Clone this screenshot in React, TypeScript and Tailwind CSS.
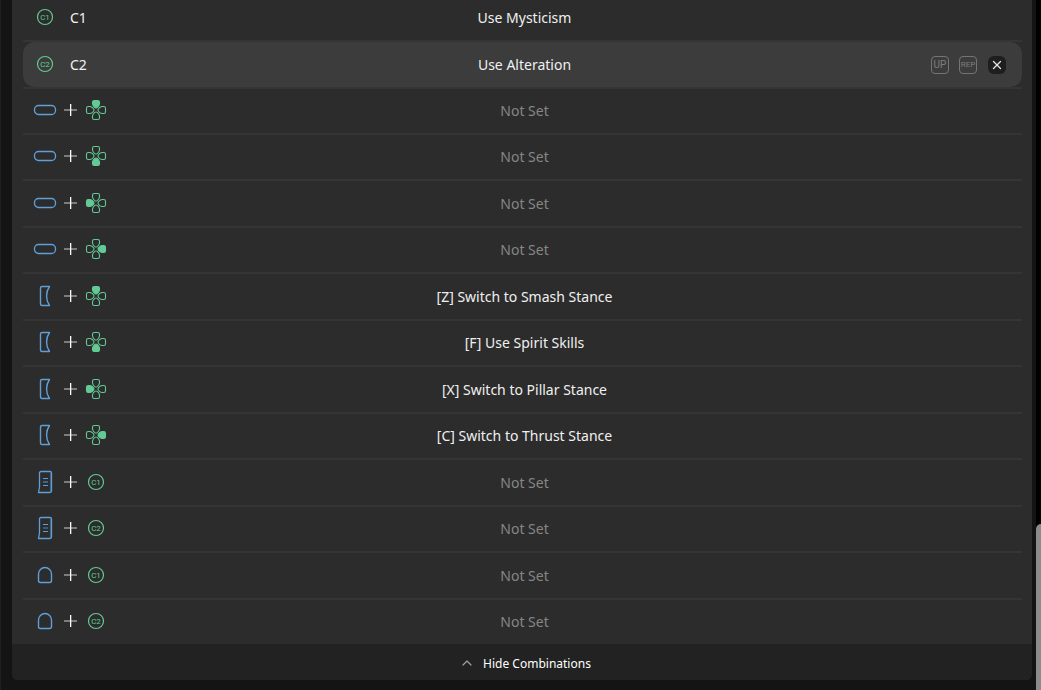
import { ChevronUp, X } from "lucide-react";
import clsx from "clsx";

type IconName = "up" | "down" | "left" | "right" | "c1" | "c2" | "pill" | "bumper" | "trigger" | "paddle";

type Binding = {
  keys: IconName[];
  name?: string;
  action?: string;
  active?: boolean;
  tall?: boolean;
};

const bindings: Binding[] = [
  { keys: ["c1"], name: "C1", action: "Use Mysticism" },
  { keys: ["c2"], name: "C2", action: "Use Alteration", active: true, tall: true },
  { keys: ["pill", "up"] },
  { keys: ["pill", "down"] },
  { keys: ["pill", "left"], tall: true },
  { keys: ["pill", "right"] },
  { keys: ["bumper", "up"], action: "[Z] Switch to Smash Stance", tall: true },
  { keys: ["bumper", "down"], action: "[F] Use Spirit Skills" },
  { keys: ["bumper", "left"], action: "[X] Switch to Pillar Stance", tall: true },
  { keys: ["bumper", "right"], action: "[C] Switch to Thrust Stance" },
  { keys: ["trigger", "c1"], tall: true },
  { keys: ["trigger", "c2"] },
  { keys: ["paddle", "c1"], tall: true },
  { keys: ["paddle", "c2"] },
];

const petals = [
  { dir: "up", angle: 0 },
  { dir: "right", angle: 90 },
  { dir: "down", angle: 180 },
  { dir: "left", angle: 270 },
];

function KeyIcon({ name }: { name: IconName }) {
  const green = "#63ca95";
  const blue = "#5f9fd8";

  if (name === "c1" || name === "c2") {
    return (
      <svg viewBox="0 0 24 24" className="w-6 h-6 shrink-0" fill="none">
        <circle cx="12" cy="12" r="7.5" stroke={green} strokeWidth="1.2" />
        <text
          x="12"
          y="15"
          textAnchor="middle"
          fill={green}
          className="font-['Roboto',sans-serif] text-[8px]"
        >
          {name.toUpperCase()}
        </text>
      </svg>
    );
  }

  if (name === "pill") {
    return (
      <svg viewBox="0 0 24 24" className="w-6 h-6 shrink-0" fill="none" stroke={blue} strokeWidth="1.3">
        <rect x="1.5" y="7.5" width="21" height="9" rx="4" />
      </svg>
    );
  }

  if (name === "bumper") {
    return (
      <svg viewBox="0 0 24 24" className="w-6 h-6 shrink-0" fill="none" stroke={blue} strokeWidth="1.4" strokeLinejoin="round">
        <path d="M9 2.5H16.5C12.6 8 12.6 16 16.5 21.5H9Q7.5 21.5 7.5 20V4Q7.5 2.5 9 2.5Z" />
      </svg>
    );
  }

  if (name === "trigger") {
    return (
      <svg viewBox="0 0 24 24" className="w-6 h-6 shrink-0" fill="none" stroke={blue} strokeWidth="1.3" strokeLinejoin="round">
        <path d="M8 1.5H17Q18.5 1.5 18.5 3V20.5Q18.5 22.5 16.5 22.5H5.5L6.5 17V3Q6.5 1.5 8 1.5Z" />
        <path d="M17.5 3V21" strokeOpacity="0.4" />
        <path d="M10 8.5H15M10 15.5H15" strokeWidth="1.2" />
        <path d="M10 12H15" strokeWidth="1.2" strokeOpacity="0.8" />
      </svg>
    );
  }

  if (name === "paddle") {
    return (
      <svg viewBox="0 0 24 24" className="w-6 h-6 shrink-0" fill="none" stroke={blue} strokeWidth="1.4">
        <path d="M7.5 19.5H16.5Q18.5 19.5 18.5 17.5V11A6.5 6.5 0 0 0 5.5 11V17.5Q5.5 19.5 7.5 19.5Z" />
      </svg>
    );
  }

  return (
    <svg viewBox="0 0 24 24" className="w-6 h-6 shrink-0" fill="none" stroke={green} strokeWidth="1.1">
      {petals.map((petal) => (
        <path
          key={petal.dir}
          d="M10.3 2.5H13.7Q15.5 2.5 15.5 4.3V6Q15.2 8.2 13.2 9.6Q12 10.4 10.8 9.6Q8.8 8.2 8.5 6V4.3Q8.5 2.5 10.3 2.5Z"
          fill={petal.dir === name ? green : "none"}
          transform={`rotate(${petal.angle} 12 12)`}
        />
      ))}
    </svg>
  );
}

function Plus() {
  return (
    <svg viewBox="0 0 13 24" className="w-[13px] h-6 shrink-0">
      <rect x="0" y="11" width="13" height="2" fill="#7c7c7c" />
      <rect x="6" y="6" width="1.3" height="12" fill="#ffffff" />
    </svg>
  );
}

function RowActions() {
  return (
    <div className="flex items-center gap-2.5 mr-2.5 pt-0.5">
      <button className="w-[18px] h-[18px] rounded border border-[#747474] flex items-center justify-center font-['Roboto',sans-serif] text-[10px] leading-none text-[#7c7c7c]">
        UP
      </button>
      <button className="w-[18px] h-[18px] rounded border border-[#747474] flex items-center justify-center font-['Roboto',sans-serif] text-[8px] leading-none text-[#7c7c7c]">
        REP
      </button>
      <button aria-label="Clear" className="ml-px w-[18px] h-[18px] rounded-md bg-[#1e1e1e] flex items-center justify-center">
        <X className="w-3.5 h-3.5 text-[#e6e6e6] shrink-0" strokeWidth={2.2} />
      </button>
    </div>
  );
}

function BindingRow({ binding }: { binding: Binding }) {
  return (
    <li className="border-b-2 border-[#353535] last:border-b-0">
      <div
        className={clsx(
          "grid grid-cols-[1fr_auto_1fr] items-center pl-2.5 pr-1.5",
          binding.tall ? "h-[45px] pb-px" : "h-[44px] pb-0.5",
          binding.active && "bg-[#3c3c3c] rounded-xl"
        )}
      >
        <div className="flex items-center gap-[7px]">
          <KeyIcon name={binding.keys[0]} />
          {binding.keys[1] && <Plus />}
          {binding.keys[1] && <KeyIcon name={binding.keys[1]} />}
          {binding.name && <span className="pl-1.5 pt-0.5 text-[#f2f2f2]">{binding.name}</span>}
        </div>
        <span className={clsx("pt-0.5", binding.action ? "text-[#f0f0f0]" : "text-[#868686]")}>
          {binding.action ?? "Not Set"}
        </span>
        <div className="flex justify-end">{binding.active && <RowActions />}</div>
      </div>
    </li>
  );
}

export default function App() {
  return (
    <div className="h-screen overflow-hidden flex bg-[#141414] font-['Noto_Sans',sans-serif] text-sm">
      <main className="flex-1 border-l border-[#202020] pl-[11px] pr-1">
        <section className="-mt-1 rounded-b-md overflow-hidden bg-[#2c2c2c]">
          <ul className="pl-[11px] pr-2.5">
            {bindings.map((binding, i) => (
              <BindingRow key={i} binding={binding} />
            ))}
          </ul>
          <button className="w-full h-9 pl-1.5 pt-0.5 flex items-center justify-center gap-2 bg-[#222222] text-white text-xs">
            <ChevronUp className="w-4 h-4 text-[#a0a0a0]" strokeWidth={1.8} />
            <span className="pt-0.5">Hide Combinations</span>
          </button>
        </section>
      </main>
      {/* Scrollbar */}
      <div className="w-[5px] bg-black flex flex-col justify-end">
        <div className="h-[24%] bg-[#8b8b8b] rounded-tl-md" />
      </div>
    </div>
  );
}
